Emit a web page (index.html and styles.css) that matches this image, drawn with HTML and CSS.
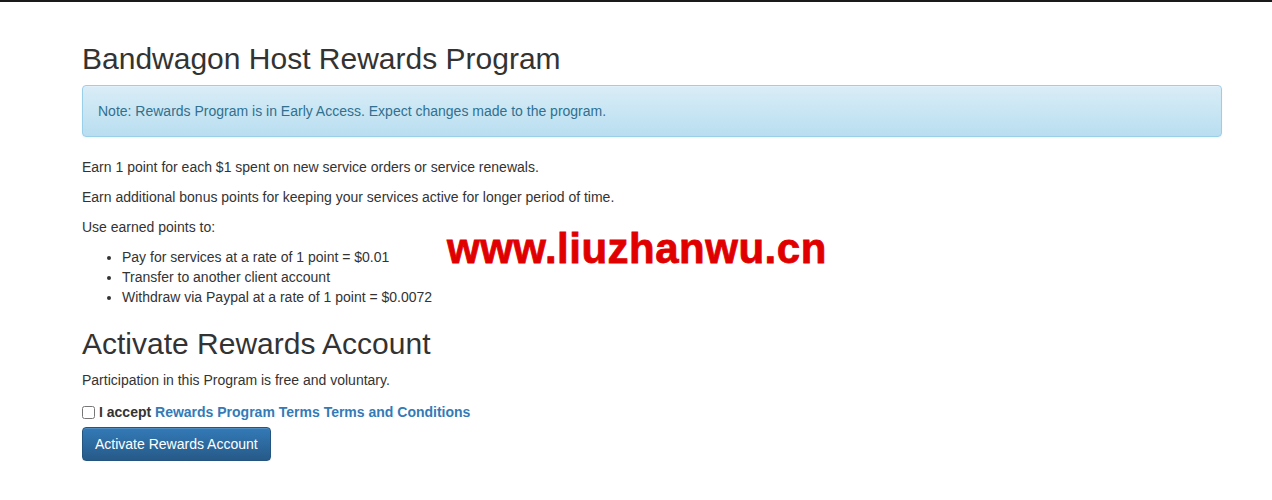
FILE: index.html
```html
<!DOCTYPE html>
<html lang="en">
<head>
    <meta charset="UTF-8">
    <meta name="viewport" content="width=device-width, initial-scale=1.0">
    <title>Rewards Program</title>
    <link rel="stylesheet" href="styles.css">
</head>
<body>
    <div class="container">
        <h2>Bandwagon Host Rewards Program</h2>
        <div class="alert-info">Note: Rewards Program is in Early Access. Expect changes made to the program.</div>

        <p>Earn 1 point for each $1 spent on new service orders or service renewals.</p>
        <p>Earn additional bonus points for keeping your services active for longer period of time.</p>
        <p>Use earned points to:</p>
        <ul>
            <li>Pay for services at a rate of 1 point = $0.01</li>
            <li>Transfer to another client account</li>
            <li>Withdraw via Paypal at a rate of 1 point = $0.0072</li>
        </ul>

        <h2>Activate Rewards Account</h2>
        <p>Participation in this Program is free and voluntary.</p>
        <form class="activate" onsubmit="return false;">
            <label class="accept">
                <input type="checkbox" name="accept">I accept
                <a href="#">Rewards Program Terms</a> <a href="#">Terms and Conditions</a>
            </label>
            <div>
                <button type="submit" class="btn-primary">Activate Rewards Account</button>
            </div>
        </form>
    </div>

    <!-- site stamp -->
    <div class="stamp">www.liuzhanwu.cn</div>
</body>
</html>
```

FILE: styles.css
```css
body {
    margin: 0;
    border-top: 2px solid #1a1a1a;
    background: #fff;
    color: #333;
    font-family: "Liberation Sans", Arial, sans-serif;
    font-size: 14px;
    line-height: 20px;
}
.container {
    width: 1140px;
    margin-left: 82px;
    padding-top: 20px;
}
h2 {
    font-size: 30px;
    font-weight: normal;
    line-height: 33px;
    margin: 20px 0 10px;
}
p {
    margin: 0 0 10px;
}
ul {
    margin: 0 0 10px;
    padding-left: 40px;
}
a {
    color: #337ab7;
    text-decoration: none;
}
.alert-info {
    padding: 15px;
    margin-bottom: 20px;
    border: 1px solid #9acfea;
    border-radius: 4px;
    color: #31708f;
    background: linear-gradient(to bottom, #d9edf7 0%, #b9def0 100%);
    box-shadow: inset 0 1px 0 rgba(255, 255, 255, 0.25), 0 1px 2px rgba(0, 0, 0, 0.05);
}
.activate {
    margin-top: 12px;
}
.accept {
    display: inline-block;
    font-weight: bold;
    margin-bottom: 5px;
}
.accept input {
    width: 13px;
    height: 13px;
    margin: 0 4px 0 0;
    vertical-align: -2px;
}
.btn-primary {
    padding: 6px 12px;
    font-family: inherit;
    font-size: 14px;
    line-height: 20px;
    color: #fff;
    border: 1px solid #245580;
    border-radius: 4px;
    background: linear-gradient(to bottom, #337ab7 0%, #265a88 100%);
    box-shadow: inset 0 1px 0 rgba(255, 255, 255, 0.15), 0 1px 1px rgba(0, 0, 0, 0.075);
    cursor: pointer;
}
.stamp {
    position: absolute;
    left: 447px;
    top: 228px;
    color: #e00000;
    font-family: "Liberation Sans", Arial, sans-serif;
    font-size: 42px;
    font-weight: bold;
    line-height: 42px;
    letter-spacing: 0.5px;
    -webkit-text-stroke: 0.8px #e00000;
}
```
